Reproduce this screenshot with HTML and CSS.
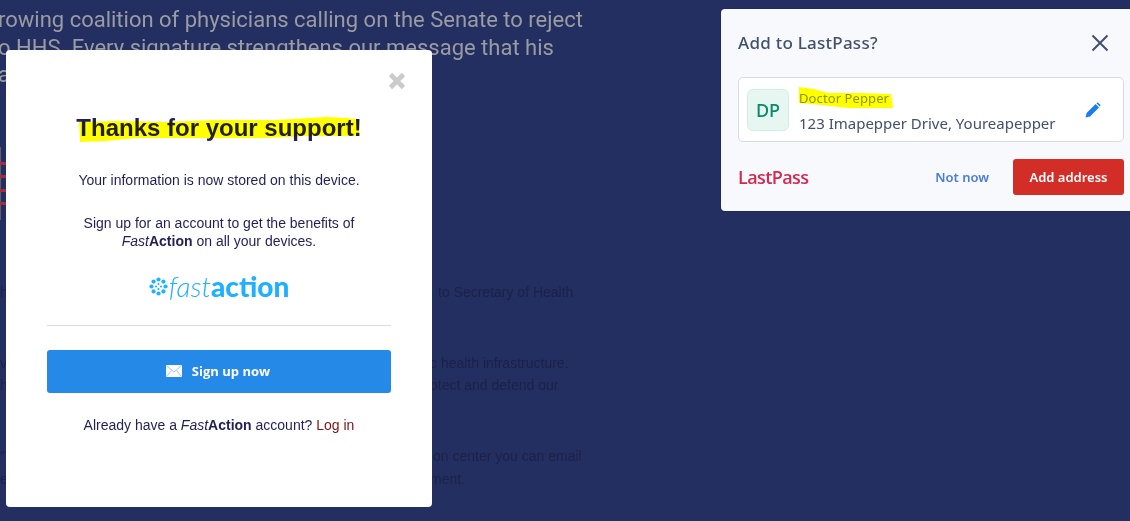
FILE: index.html
```html
<!DOCTYPE html>
<html lang="en">
<head>
    <meta charset="UTF-8">
    <meta name="viewport" content="width=device-width, initial-scale=1.0">
    <title>Thanks for your support</title>
    <link rel="stylesheet" href="styles.css">
</head>
<body>
    <!-- page behind the modal -->
    <div class="page-copy">
        <div class="lead">
            <div>rowing coalition of physicians calling on the Senate to reject</div>
            <div>o HHS. Every signature strengthens our message that his</div>
            <div>an</div>
        </div>
        <div class="seal-edge"></div>
        <div class="copy-block">
            <div class="copy-line"><span>hi</span><span class="nudge">to Secretary of Health</span></div>
            <div class="copy-line"><span>&nbsp;</span><span></span></div>
        </div>
        <div class="copy-block">
            <div class="copy-line"><span>v</span><span>c health infrastructure.</span></div>
            <div class="copy-line"><span>h</span><span>otect and defend our</span></div>
            <div class="copy-line"><span>&nbsp;&nbsp;l</span><span></span></div>
        </div>
        <div class="copy-block">
            <div class="copy-line"><span>"</span><span class="nudge-small">on center you can email</span></div>
            <div class="copy-line"><span>ed</span><span>ment.</span></div>
        </div>
    </div>

    <!-- fastaction modal -->
    <div class="modal">
        <svg class="modal-close" viewBox="0 0 18 18" width="18" height="18">
            <path d="M2.5 2.5 L15.5 15.5 M15.5 2.5 L2.5 15.5" stroke="#cbcbcb" stroke-width="4.6" fill="none"/>
        </svg>
        <h1 class="modal-title">
            <span class="title-text">Thanks for your support!
                <svg class="title-mark" viewBox="0 0 284 26" width="284" height="26">
                    <path d="M3 6 L40 5 L90 6 L140 4 L200 4 L250 1 L272 2 L283 4 L283 20 L230 20 L190 22 L120 22 L60 22 L30 25 L4 26 Z" fill="#ffff00"/>
                </svg>
            </span>
        </h1>
        <p class="stored">Your information is now stored on this device.</p>
        <p class="benefits">Sign up for an account to get the benefits of<br><i>Fast</i><b>Action</b> on all your devices.</p>
        <div class="fa-logo">
            <svg class="fa-mark" viewBox="0 0 20 20" width="19" height="19" fill="#1fb0ff">
                <circle cx="10" cy="2.6" r="2.2"/>
                <circle cx="15.2" cy="4.8" r="2.2"/>
                <circle cx="17.4" cy="10" r="2.2"/>
                <circle cx="15.2" cy="15.2" r="2.2"/>
                <circle cx="10" cy="17.4" r="2.2"/>
                <circle cx="4.8" cy="15.2" r="2.2"/>
                <circle cx="2.6" cy="10" r="2.2"/>
                <circle cx="4.8" cy="4.8" r="2.2"/>
                <circle cx="10" cy="7.4" r="1.1"/>
                <circle cx="12.6" cy="10" r="1.1"/>
                <circle cx="10" cy="12.6" r="1.1"/>
                <circle cx="7.4" cy="10" r="1.1"/>
            </svg>
            <span class="fa-word"><i>fast</i><b>action</b></span>
        </div>
        <hr class="modal-rule">
        <button class="signup-button">
            <svg viewBox="0 0 16 12" width="16" height="12">
                <rect width="16" height="12" fill="#fff"/>
                <path d="M0.5 0.5 L8 7 L15.5 0.5 M0.5 11.5 L5.5 5.5 M15.5 11.5 L10.5 5.5" stroke="#8ccbf5" fill="none"/>
            </svg>
            Sign up now
        </button>
        <p class="login-line">Already have a <i>Fast</i><b>Action</b> account? <span class="login-link">Log in</span></p>
    </div>

    <!-- lastpass prompt -->
    <div class="lp-prompt">
        <div class="lp-head">
            <h2>Add to LastPass?</h2>
            <svg viewBox="0 0 18 18" width="18" height="18">
                <path d="M1.5 1.5 L16.5 16.5 M16.5 1.5 L1.5 16.5" stroke="#41506b" stroke-width="2" fill="none"/>
            </svg>
        </div>
        <div class="lp-card">
            <div class="lp-avatar">DP</div>
            <div class="lp-info">
                <div class="lp-name">Doctor Pepper
                    <svg class="name-mark" viewBox="0 0 94 22" width="94" height="22">
                        <path d="M0 0 L15 2 L29 6 L60 6 L92 7 L94 21 L49 21 L22 18 L0 16 Z" fill="#ffff00"/>
                    </svg>
                </div>
                <div class="lp-address">123 Imapepper Drive, Youreapepper</div>
            </div>
            <svg class="lp-edit" viewBox="0 0 16 16" width="16" height="16">
                <path d="M0.5 15.5 L1.6 11 L10.6 2 L14 5.4 L5 14.4 Z M11.8 0.9 Q12.6 0.2 13.4 0.9 L15.1 2.6 Q15.8 3.4 15.1 4.2 L14.8 4.6 L11.4 1.2 Z" fill="#1a7cf0"/>
            </svg>
        </div>
        <div class="lp-foot">
            <span class="lp-logo">LastPass</span>
            <span class="lp-later">Not now</span>
            <button class="lp-add">Add address</button>
        </div>
    </div>
</body>
</html>
```

FILE: styles.css
```css
html, body {
    height: 100%;
}

body {
    margin: 0;
    overflow: hidden;
    background-color: #232f60;
    font-family: "Liberation Sans", Arial, sans-serif;
}

/* page behind the modal */
.page-copy {
    padding-top: 6px;
}

.lead {
    margin-left: -2px;
    font-family: Roboto, sans-serif;
    font-size: 22px;
    line-height: 27.5px;
    color: #9b9ba3;
    white-space: nowrap;
}

.seal-edge {
    width: 6px;
    height: 73px;
    margin-top: 58px;
    background-image:
        repeating-linear-gradient(to bottom, #a12e3a 0, #a12e3a 3px, transparent 3px, transparent 13.5px),
        linear-gradient(to bottom, #6b5a6c, #6b5a6c);
    background-size: 6px 44px, 1px 73px;
    background-position: 0 15px, 0 0;
    background-repeat: no-repeat;
}

.copy-block {
    margin-top: 26px;
}

.seal-edge + .copy-block {
    margin-top: 61px;
}

.copy-line {
    display: grid;
    grid-template-columns: 430px 1fr;
    font-size: 14px;
    line-height: 22.5px;
    height: 22.5px;
    color: #1d2149;
    white-space: nowrap;
}

.nudge {
    padding-left: 8px;
}

.nudge-small {
    padding-left: 3px;
}

/* fastaction modal */
.modal {
    position: absolute;
    left: 6px;
    top: 50px;
    width: 426px;
    height: 457px;
    box-sizing: border-box;
    padding: 64px 41px 0;
    background-color: #fff;
    border-radius: 4px;
    color: #221f57;
    text-align: center;
    font-size: 14px;
}

.modal-close {
    position: absolute;
    right: 26px;
    top: 22px;
}

.modal-title {
    margin: 0;
    font-size: 24px;
    line-height: 28px;
    font-weight: bold;
}

.title-text {
    position: relative;
    display: inline-block;
}

.title-mark {
    position: absolute;
    left: 0;
    top: 2px;
    mix-blend-mode: multiply;
}

.stored {
    margin: 29px 0 0;
    line-height: 18px;
}

.benefits {
    margin: 25px 0 0;
    line-height: 18px;
}

.fa-logo {
    display: flex;
    justify-content: center;
    align-items: center;
    gap: 1px;
    margin-top: 17px;
    height: 38px;
    color: #1fb0ff;
}

.fa-word {
    font-family: Lato, sans-serif;
    font-size: 28px;
    line-height: 38px;
}

.fa-word i {
    font-weight: 300;
}

.fa-word b {
    font-weight: 900;
}

.modal-rule {
    margin: 20px 0 0;
    border: 0;
    border-top: 1px solid #dcdcdc;
}

.signup-button {
    display: flex;
    justify-content: center;
    align-items: center;
    gap: 10px;
    width: 100%;
    height: 43px;
    margin-top: 24px;
    padding: 0 2px 2px 0;
    border: 0;
    border-radius: 3px;
    background-color: #2589e8;
    color: #fff;
    font-family: "Open Sans", sans-serif;
    font-size: 13px;
    font-weight: 700;
}

.login-line {
    margin: 23px 0 0;
    line-height: 18px;
}

.login-link {
    color: #7a1416;
}

/* lastpass prompt */
.lp-prompt {
    position: absolute;
    left: 721px;
    top: 9px;
    width: 409px;
    height: 202px;
    box-sizing: border-box;
    padding: 0 6px 0 17px;
    background-color: #f7f9fd;
    border-radius: 4px 0 0 4px;
    box-shadow: 0 0 2px rgba(0, 0, 0, 0.3);
    font-family: "Noto Sans", sans-serif;
    color: #41506b;
}

.lp-head {
    display: flex;
    justify-content: space-between;
    align-items: center;
    height: 68px;
    box-sizing: border-box;
    padding: 0 15px 1px 0;
}

.lp-head h2 {
    margin: 0;
    font-size: 17px;
    font-weight: 500;
    letter-spacing: 0.25px;
}

.lp-card {
    display: flex;
    align-items: center;
    gap: 10px;
    height: 65px;
    box-sizing: border-box;
    padding: 0 22px 0 8px;
    background-color: #fff;
    border: 1px solid #d6dbe4;
    border-radius: 5px;
}

.lp-avatar {
    width: 42px;
    height: 42px;
    box-sizing: border-box;
    background-color: #e6f6f1;
    border: 1px solid #d2eee4;
    border-radius: 6px;
    color: #0a8a6c;
    font-size: 18px;
    font-weight: 500;
    line-height: 40px;
    text-align: center;
}

.lp-info {
    flex: 1;
    margin-top: 3px;
}

.lp-name {
    position: relative;
    font-size: 13px;
    line-height: 18px;
    letter-spacing: 0.1px;
    color: #8d96a8;
    margin-bottom: 6px;
}

.name-mark {
    position: absolute;
    left: 0;
    top: -2px;
    mix-blend-mode: multiply;
}

.lp-address {
    font-size: 15px;
    line-height: 20px;
    white-space: nowrap;
}

.lp-foot {
    display: flex;
    align-items: center;
    height: 36px;
    margin-top: 17px;
}

.lp-logo {
    flex: 1;
    font-family: "Open Sans", sans-serif;
    font-size: 18px;
    font-weight: 600;
    letter-spacing: -0.6px;
    color: #d4294f;
}

.lp-later {
    margin-right: 24px;
    font-size: 13px;
    font-weight: 600;
    color: #4a7cd8;
}

.lp-add {
    width: 111px;
    height: 36px;
    border: 0;
    border-radius: 3px;
    background-color: #d32d27;
    color: #fff;
    font-family: "Noto Sans", sans-serif;
    font-size: 13px;
    font-weight: 600;
}
```
